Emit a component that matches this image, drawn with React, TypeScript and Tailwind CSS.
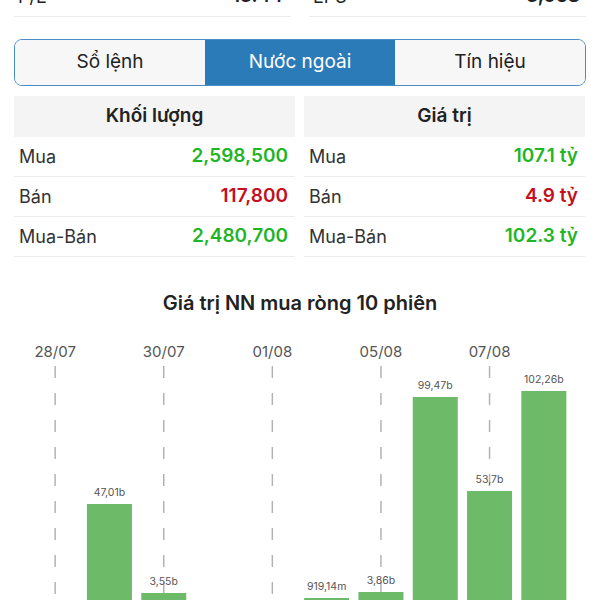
import React from "react";

const font = { fontFamily: "Inter, 'Noto Sans', 'Liberation Sans', sans-serif" };

type Bar = { slot: number; top: number; label: string };

const bars: Bar[] = [
  { slot: 2, top: 505, label: "47,01b" },
  { slot: 3, top: 594, label: "3,55b" },
  { slot: 6, top: 599, label: "919,14m" },
  { slot: 7, top: 593, label: "3,86b" },
  { slot: 8, top: 398, label: "99,47b" },
  { slot: 9, top: 492, label: "53,7b" },
  { slot: 10, top: 392, label: "102,26b" },
];

const dates = [
  { slot: 1, t: "28/07" },
  { slot: 3, t: "30/07" },
  { slot: 5, t: "01/08" },
  { slot: 7, t: "05/08" },
  { slot: 9, t: "07/08" },
];

const SVG_TOP = 330;
const slotW = 54.3;
const cx = (s: number) => 28 + slotW * (s - 0.5);

function Chart() {
  return (
    <svg width="600" height="280" viewBox="0 0 600 280" className="block mt-[12px]">
      {dates.map((d) => (
        <g key={d.t}>
          <text
            x={cx(d.slot)}
            y={28}
            textAnchor="middle"
            fontSize="15"
            fill="#555"
            style={font}
          >
            {d.t}
          </text>
          <line
            x1={cx(d.slot)}
            x2={cx(d.slot)}
            y1={37}
            y2={280}
            stroke="#b3b3b3"
            strokeWidth="1.5"
            strokeDasharray="12 15"
          />
        </g>
      ))}
      {bars.map((b) => (
        <rect
          key={b.label}
          x={cx(b.slot) - 22.5}
          y={b.top - SVG_TOP}
          width={45}
          height={300}
          fill="#6dbb69"
        />
      ))}
      {bars.map((b) => (
        <text
          key={b.label + "t"}
          x={cx(b.slot)}
          y={b.top - SVG_TOP - 8}
          textAnchor="middle"
          fontSize="10.5"
          fill="#555"
          style={font}
        >
          {b.label}
        </text>
      ))}
    </svg>
  );
}

function Table({
  title,
  rows,
}: {
  title: string;
  rows: { l: string; v: string; c: string }[];
}) {
  return (
    <div className="flex flex-col">
      <div className="h-[41px] bg-[#f4f4f4] flex items-center justify-center text-[19px] font-semibold text-[#222]">
        {title}
      </div>
      {rows.map((r) => (
        <div
          key={r.l}
          className="h-[40px] border-b border-[#ececec] flex items-center justify-between pl-[5px] pr-[7px] text-[18px]"
        >
          <span className="text-[#333]">{r.l}</span>
          <span className={`text-[19px] font-semibold ${r.c}`}>{r.v}</span>
        </div>
      ))}
    </div>
  );
}

export default function App() {
  const g = "text-[#1fb526]";
  const r = "text-[#c3101c]";
  return (
    <div className="w-[600px] h-[600px] overflow-hidden bg-white" style={font}>
      <div className="px-[14px]">
        <div className="-mt-[24px] grid grid-cols-2 gap-[18px]">
          <div className="h-[41px] border-b border-[#ececec] flex items-center justify-between pl-[4px] pr-[8px] text-[18px] text-[#222]">
            <span>P/E</span>
            <span className="text-[19px] font-semibold">13.44</span>
          </div>
          <div className="h-[41px] border-b border-[#ececec] flex items-center justify-between pl-[4px] pr-[6px] text-[18px] text-[#222]">
            <span>EPS</span>
            <span className="text-[19px] font-semibold">3,058</span>
          </div>
        </div>

        <div className="mt-[22px] h-[47px] grid grid-cols-3 border-[1.5px] border-[#4a8cc5] rounded-[8px] overflow-hidden text-[19px]">
          <div className="bg-[#f7f7f7] flex items-center justify-center text-[#222]">Sổ lệnh</div>
          <div className="bg-[#2b7bb9] flex items-center justify-center text-white">Nước ngoài</div>
          <div className="bg-[#f7f7f7] flex items-center justify-center text-[#222]">Tín hiệu</div>
        </div>

        <div className="mt-[10px] grid grid-cols-2 gap-[9px] pr-[1px]">
          <Table
            title="Khối lượng"
            rows={[
              { l: "Mua", v: "2,598,500", c: g },
              { l: "Bán", v: "117,800", c: r },
              { l: "Mua-Bán", v: "2,480,700", c: g },
            ]}
          />
          <Table
            title="Giá trị"
            rows={[
              { l: "Mua", v: "107.1 tỷ", c: g },
              { l: "Bán", v: "4.9 tỷ", c: r },
              { l: "Mua-Bán", v: "102.3 tỷ", c: g },
            ]}
          />
        </div>
      </div>

      <div className="mt-[32px] h-[28px] flex items-center justify-center text-[20px] font-semibold text-[#222]">
        Giá trị NN mua ròng 10 phiên
      </div>
      <Chart />
    </div>
  );
}
